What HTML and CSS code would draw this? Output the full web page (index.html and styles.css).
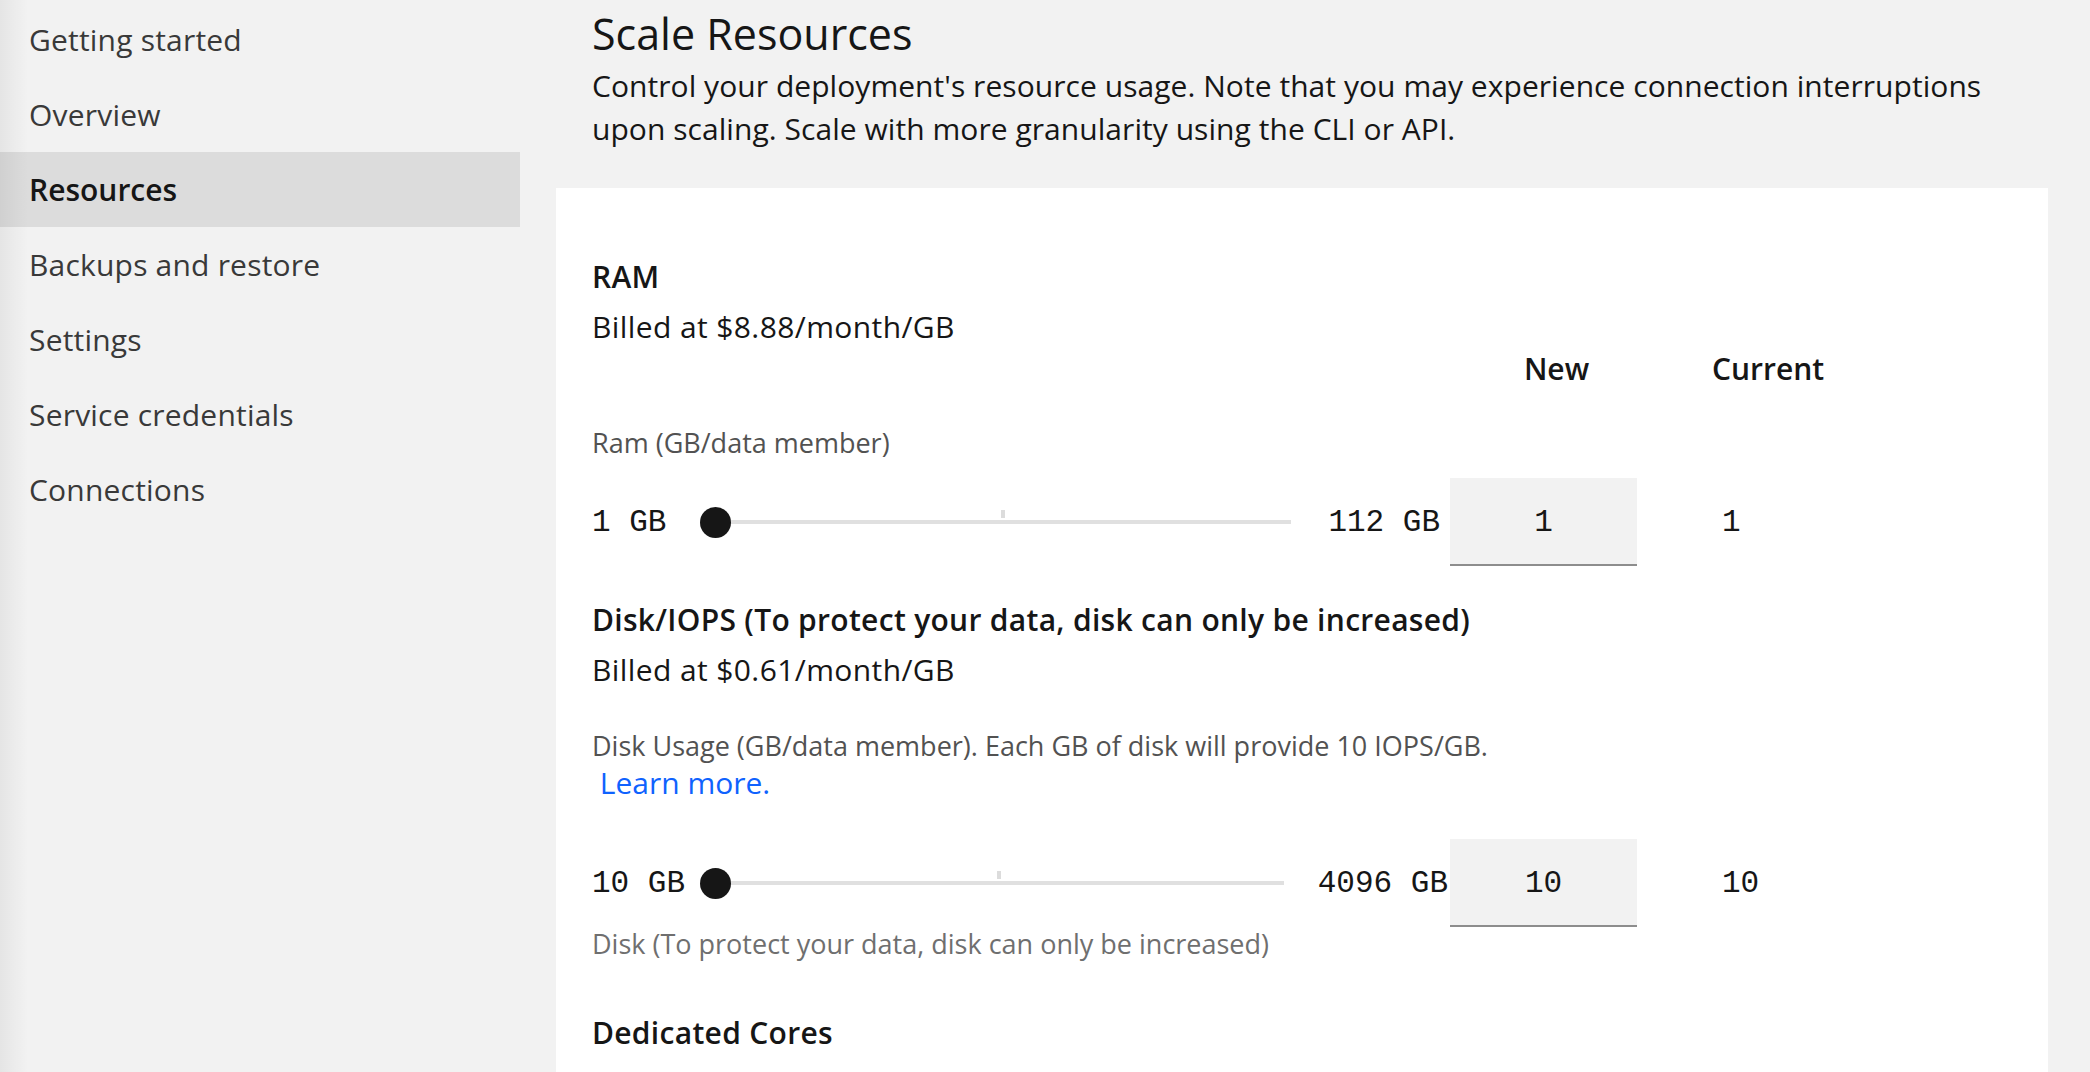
FILE: index.html
```html
<!DOCTYPE html>
<html lang="en">
<head>
<meta charset="utf-8">
<title>Resources</title>
<link rel="stylesheet" href="styles.css">
</head>
<body>
<div class="page">
  <nav class="sidenav">
    <ul class="nav-list">
      <li class="nav-item">Getting started</li>
      <li class="nav-item">Overview</li>
      <li class="nav-item nav-item--active">Resources</li>
      <li class="nav-item">Backups and restore</li>
      <li class="nav-item">Settings</li>
      <li class="nav-item">Service credentials</li>
      <li class="nav-item">Connections</li>
    </ul>
  </nav>
  <main class="main">
    <header class="intro">
      <h1 class="title">Scale Resources</h1>
      <p class="desc">Control your deployment's resource usage. Note that you may experience connection interruptions upon scaling. Scale with more granularity using the CLI or API.</p>
    </header>
    <section class="card">
      <div class="group group--ram">
        <h2 class="group-title">RAM</h2>
        <p class="billing">Billed at $8.88/month/GB</p>
        <div class="col-heads">
          <span class="col-spacer"></span>
          <span class="col-head col-head--new">New</span>
          <span class="col-head col-head--current">Current</span>
        </div>
        <p class="field-label">Ram (GB/data member)</p>
        <div class="scale-row">
          <div class="range">
            <span class="range-min">1 GB</span>
            <div class="slider"><span class="slider-tick"></span><span class="slider-thumb"></span></div>
            <span class="range-max">112 GB</span>
          </div>
          <div class="num-input">1</div>
          <div class="current">1</div>
        </div>
      </div>

      <div class="group group--disk">
        <h2 class="group-title">Disk/IOPS (To protect your data, disk can only be increased)</h2>
        <p class="billing">Billed at $0.61/month/GB</p>
        <p class="field-label">Disk Usage (GB/data member). Each GB of disk will provide 10 IOPS/GB.</p>
        <p class="link-line">&nbsp;<a class="link" href="#">Learn more.</a></p>
        <div class="scale-row">
          <div class="range">
            <span class="range-min">10 GB</span>
            <div class="slider"><span class="slider-tick"></span><span class="slider-thumb"></span></div>
            <span class="range-max range-max--wide">4096 GB</span>
          </div>
          <div class="num-input">10</div>
          <div class="current">10</div>
        </div>
        <p class="helper">Disk (To protect your data, disk can only be increased)</p>
      </div>

      <div class="group group--cores">
        <h2 class="group-title">Dedicated Cores</h2>
      </div>
    </section>
  </main>
</div>
</body>
</html>
```

FILE: styles.css
```css
* {
  box-sizing: border-box;
  margin: 0;
  padding: 0;
}

html,
body {
  height: 100%;
}

body {
  background: #f2f2f2;
  font-family: "Open Sans", "Noto Sans", sans-serif;
  color: #161616;
  overflow: hidden;
}

.page {
  display: flex;
  height: 1072px;
}

/* ---------- side navigation ---------- */
.sidenav {
  position: relative;
  width: 520px;
  flex: none;
  padding-top: 2px;
}

.sidenav::before {
  content: "";
  position: absolute;
  left: 0;
  top: 0;
  bottom: 0;
  width: 28px;
  background: linear-gradient(to right, rgba(0, 0, 0, 0.055), rgba(0, 0, 0, 0));
  pointer-events: none;
}

.nav-list {
  list-style: none;
}

.nav-item {
  height: 75px;
  line-height: 75px;
  padding-left: 29px;
  font-size: 30px;
  letter-spacing: 0.2px;
  color: #393939;
  white-space: nowrap;
}

.nav-item--active {
  background: #dcdcdc;
  color: #161616;
  font-weight: 600;
  letter-spacing: 0;
}

/* ---------- main ---------- */
.main {
  flex: 1;
  min-width: 0;
  padding: 8px 42px 0 36px;
}

.intro {
  padding: 0 36px;
}

.title {
  font-size: 43px;
  line-height: 52px;
  font-weight: 400;
}

.desc {
  margin-top: 4px;
  font-size: 30px;
  line-height: 43px;
  letter-spacing: 0.05px;
}

.card {
  margin-top: 38px;
  background: #fff;
  padding: 69px 36px 0;
  min-height: 900px;
}

.group--disk {
  margin-top: 34px;
}

.group--cores {
  margin-top: 52px;
}

.group-title {
  font-size: 30px;
  line-height: 40px;
  font-weight: 600;
  letter-spacing: 0.3px;
}

.billing {
  margin-top: 10px;
  font-size: 30px;
  line-height: 40px;
  letter-spacing: 0.4px;
}

.col-heads {
  display: flex;
  margin-top: 2px;
  font-size: 30px;
  line-height: 40px;
  font-weight: 600;
}

.col-spacer {
  flex: 1;
}

.col-head--new {
  width: 187px;
  padding-left: 26px;
  text-align: center;
}

.col-head--current {
  width: 375px;
  padding-left: 75px;
}

.field-label {
  font-size: 27px;
  line-height: 36px;
  color: #525252;
}

.group--ram .field-label {
  margin-top: 36px;
}

.group--disk .field-label {
  margin-top: 38px;
}

.link-line {
  font-size: 30px;
  line-height: 38px;
}

.link {
  color: #0f62fe;
  text-decoration: none;
}

.scale-row {
  display: flex;
  align-items: center;
  height: 88px;
  margin-top: 17px;
  font-family: "Liberation Mono", "DejaVu Sans Mono", monospace;
  font-size: 31px;
}

.group--disk .scale-row {
  margin-top: 37px;
}

.range {
  flex: 1;
  display: flex;
  align-items: center;
}

.range-min {
  width: 108px;
  flex: none;
  white-space: nowrap;
}

.range-max {
  flex: none;
  margin: 0 10px 0 37px;
  white-space: nowrap;
}

.range-max--wide {
  margin: 0 2px 0 34px;
}

.slider {
  position: relative;
  flex: 1;
  height: 31px;
}

.slider::before {
  content: "";
  position: absolute;
  left: 15px;
  right: 0;
  top: 13px;
  height: 4px;
  background: #e0e0e0;
}

.slider-tick {
  position: absolute;
  top: 3px;
  left: calc(15px + (100% - 15px) / 2 - 2px);
  width: 4px;
  height: 8px;
  background: #dcdcdc;
}

.slider-thumb {
  position: absolute;
  left: 0;
  top: 0;
  width: 31px;
  height: 31px;
  border-radius: 50%;
  background: #161616;
}

.num-input {
  width: 187px;
  height: 88px;
  flex: none;
  display: flex;
  align-items: center;
  justify-content: center;
  background: #f2f2f2;
  border-bottom: 2px solid #8d8d8d;
  padding-top: 2px;
}

.current {
  width: 375px;
  flex: none;
  padding-left: 85px;
}

.helper {
  font-size: 27px;
  line-height: 34px;
  color: #6f6f6f;
}
```
